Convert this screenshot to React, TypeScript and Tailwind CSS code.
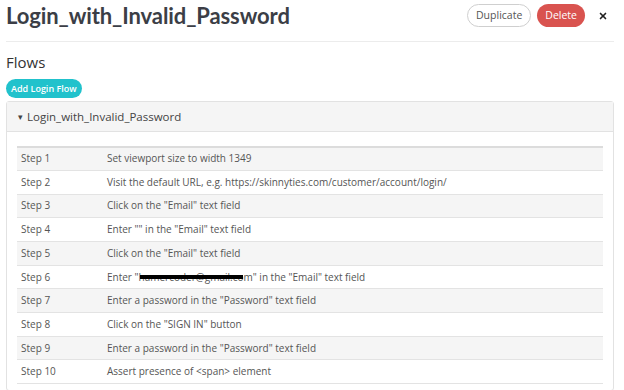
import { X } from "lucide-react";

const steps = [
  "Set viewport size to width 1349",
  "Visit the default URL, e.g. https://skinnyties.com/customer/account/login/",
  'Click on the "Email" text field',
  'Enter "" in the "Email" text field',
  'Click on the "Email" text field',
  "__REDACTED__",
  'Enter a password in the "Password" text field',
  'Click on the "SIGN IN" button',
  'Enter a password in the "Password" text field',
  "Assert presence of <span> element",
];

function Redacted() {
  return (
    <>
      Enter "
      <span className="relative">
        hamercoder@gmail.co
        <span className="absolute left-[1px] right-[1px] top-[5px] h-[4px] bg-black" />
      </span>
      m" in the "Email" text field
    </>
  );
}

export default function App() {
  return (
    <div className="h-[390px] w-[624px] overflow-hidden bg-white font-['Open_Sans',sans-serif] text-[#333]">
      <header className="ml-[6px] mr-[10px] flex h-[42px] items-center justify-between border-b border-[#ececec] pb-[10px]">
        <h1 className="font-['Lato',sans-serif] text-[22px] font-bold tracking-[-0.1px] text-[#3b3e46]">
          Login_with_Invalid_Password
        </h1>
        <div className="flex items-center gap-[6px]">
          <button className="h-[23px] rounded-full border border-[#cfcfcf] px-[8px] text-[10.5px] text-[#555]">
            Duplicate
          </button>
          <button className="h-[23px] rounded-full bg-[#d9534f] px-[8px] text-[10.5px] text-white">
            Delete
          </button>
          <X className="ml-[7px] mr-[6px] h-[10px] w-[10px] text-[#222]" strokeWidth={4} />
        </div>
      </header>

      <section className="ml-[6px] mr-[10px] pt-[9px]">
        <h2 className="text-[15px] text-[#333]">Flows</h2>
        <button className="mt-[2px] h-[19px] rounded-full bg-[#21c2cc] px-[5px] text-[9px] font-semibold text-white">
          Add Login Flow
        </button>

        <div className="mt-[3px] rounded-[3px] border border-[#e2e2e2]">
          <div className="flex h-[30px] items-center gap-[4px] border-b border-[#e2e2e2] bg-[#f5f5f5] px-[11px] text-[11.5px] text-[#444]">
            <span className="text-[9px]">▾</span>
            <span>Login_with_Invalid_Password</span>
          </div>
          <div className="px-[10px] pb-[6px] pt-[14px]">
            <table className="w-full border-collapse text-[10px] text-[#555]">
              <tbody>
                {steps.map((s, i) => (
                  <tr
                    key={i}
                    className={`h-[23.7px] border-t ${i === 0 ? "border-t-2 border-[#dcdcdc]" : "border-[#e3e3e3]"} ${i % 2 === 0 ? "bg-[#f5f5f5]" : "bg-white"} last:border-b`}
                  >
                    <td className="w-[90px] pl-[4px]">Step {i + 1}</td>
                    <td>{s === "__REDACTED__" ? <Redacted /> : s}</td>
                  </tr>
                ))}
              </tbody>
            </table>
          </div>
        </div>
      </section>
    </div>
  );
}
